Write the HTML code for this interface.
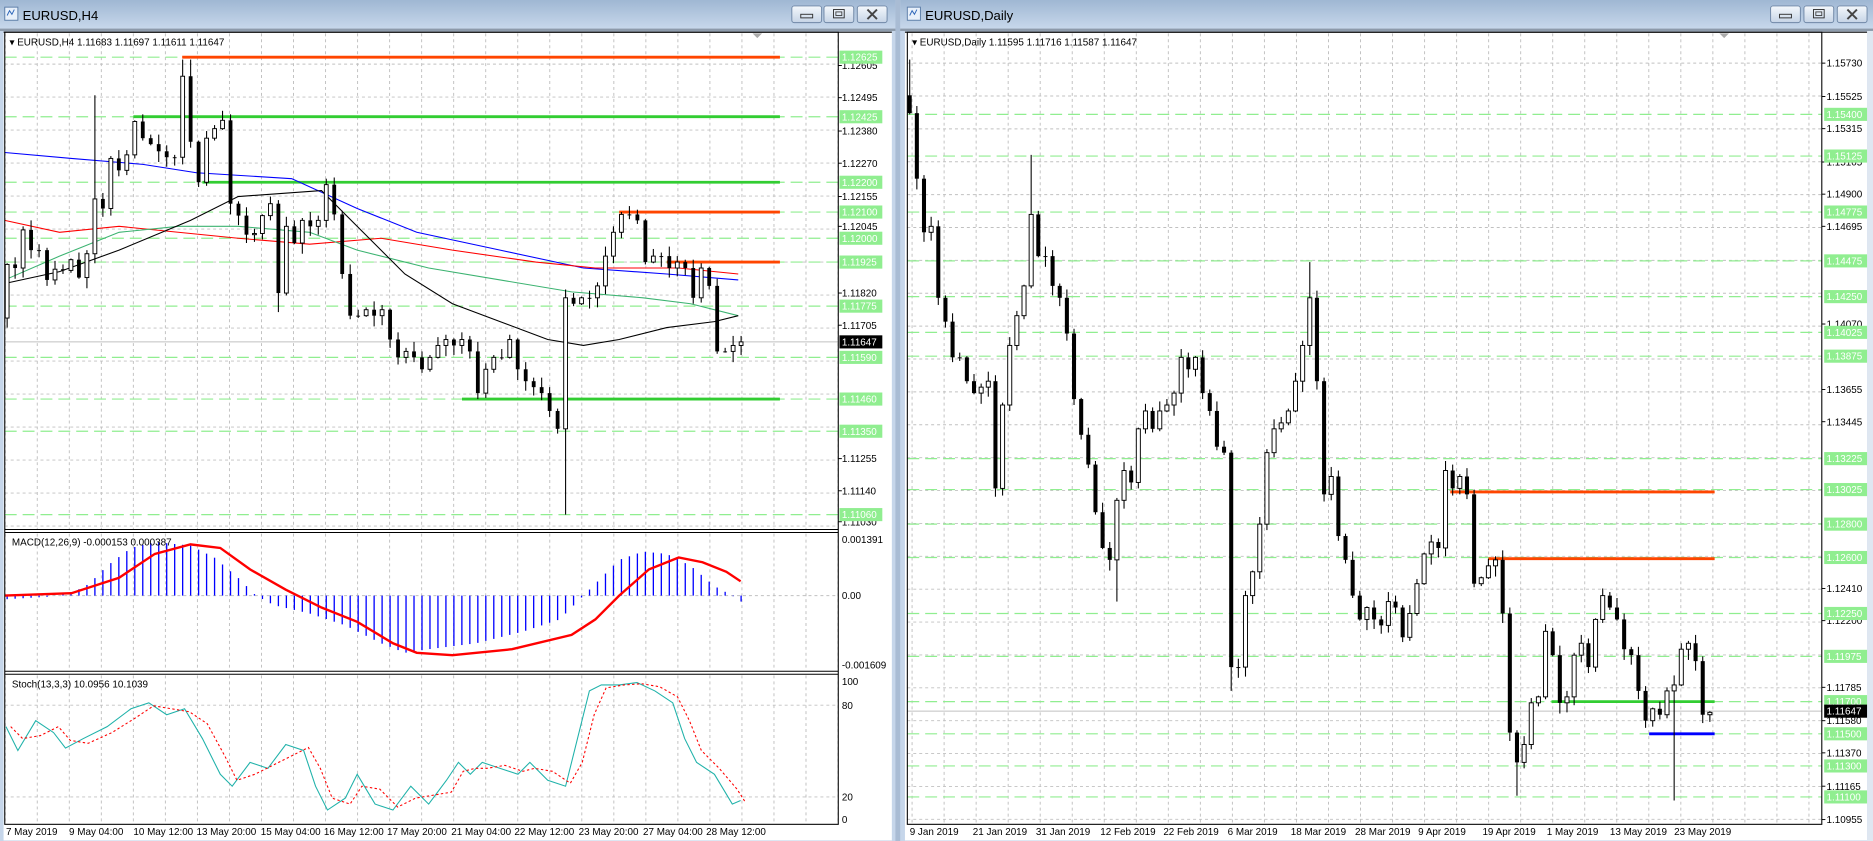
<!DOCTYPE html>
<html><head><meta charset="utf-8"><style>
html,body{margin:0;padding:0;width:1873px;height:841px;overflow:hidden;background:#c6d6ea}
svg{display:block}
text{font-family:"Liberation Sans",sans-serif}
</style></head><body>
<svg id="s" width="1873" height="841" viewBox="0 0 1573 706" preserveAspectRatio="none" xmlns="http://www.w3.org/2000/svg">
<defs>
<linearGradient id="tb" x1="0" y1="0" x2="0" y2="1"><stop offset="0" stop-color="#9fb7d3"/><stop offset="1" stop-color="#c9d9ec"/></linearGradient>
<linearGradient id="bt" x1="0" y1="0" x2="0" y2="1"><stop offset="0" stop-color="#f4f8fc"/><stop offset="1" stop-color="#c6d4e6"/></linearGradient>
</defs>
<rect x="0" y="0" width="752" height="706" fill="#c6d6ea"/>
<rect x="0" y="0" width="752" height="25" fill="url(#tb)"/>
<rect x="756" y="0" width="817" height="706" fill="#c6d6ea"/>
<rect x="756" y="0" width="817" height="25" fill="url(#tb)"/>
<rect x="752" y="0" width="4" height="706" fill="#a9bcd4"/>
<rect x="0" y="24" width="752" height="2" fill="#8d9aaa"/>
<rect x="756" y="24" width="817" height="2" fill="#8d9aaa"/>
<g><rect x="4" y="6" width="11" height="11" fill="#e8f0fa" stroke="#5c7ea8" stroke-width="0.8"/><path d="M6 13 L8 9 L10 12 L12 8" stroke="#2a64b8" fill="none" stroke-width="0.8"/></g>
<text x="19" y="17" font-size="11" fill="#000">EURUSD,H4</text>
<g><rect x="762" y="6" width="11" height="11" fill="#e8f0fa" stroke="#5c7ea8" stroke-width="0.8"/><path d="M764 13 L766 9 L768 12 L770 8" stroke="#2a64b8" fill="none" stroke-width="0.8"/></g>
<text x="777" y="17" font-size="11" fill="#000">EURUSD,Daily</text>
<g id="btns"></g>
<rect x="3" y="26.5" width="746" height="679" fill="#fff"/>
<rect x="760" y="26.5" width="808" height="679" fill="#fff"/>
<rect x="1568" y="26" width="5" height="680" fill="#dfe7f1"/>
<line x1="3" y1="27" x2="749" y2="27" stroke="#000" stroke-width="0.9"/>
<line x1="760" y1="27" x2="1568" y2="27" stroke="#000" stroke-width="0.9"/>
<g id="grid"></g>
<g id="lines"></g>
<g id="cand"></g>
<g id="lab" font-size="8.3"></g>
<rect x="4" y="27" width="700" height="665" fill="none" stroke="#000" stroke-width="0.9"/>
<line x1="4" y1="444.5" x2="704" y2="444.5" stroke="#000" stroke-width="0.9"/>
<line x1="4" y1="447" x2="704" y2="447" stroke="#000" stroke-width="0.9"/>
<line x1="4" y1="563.5" x2="704" y2="563.5" stroke="#000" stroke-width="0.9"/>
<line x1="4" y1="566" x2="704" y2="566" stroke="#000" stroke-width="0.9"/>
<rect x="762" y="27" width="768" height="665" fill="none" stroke="#000" stroke-width="0.9"/>
<text x="8" y="38" font-size="8.3">▾ EURUSD,H4  1.11683 1.11697 1.11611 1.11647</text>
<text x="766" y="38" font-size="8.3">▾ EURUSD,Daily  1.11595 1.11716 1.11587 1.11647</text>
<text x="10" y="458" font-size="8.3">MACD(12,26,9) -0.000153 0.000387</text>
<text x="10" y="577" font-size="8.3">Stoch(13,3,3) 10.0956 10.1039</text>
<path d="M632 28 L640 28 L636 32 Z" fill="#aaa"/>
<path d="M1444 28 L1452 28 L1448 32 Z" fill="#aaa"/>
<g font-size="8.3" id="tl">
<text x="5" y="701">7 May 2019</text><text x="58" y="701">9 May 04:00</text><text x="112" y="701">10 May 12:00</text><text x="165" y="701">13 May 20:00</text><text x="219" y="701">15 May 04:00</text><text x="272" y="701">16 May 12:00</text><text x="325" y="701">17 May 20:00</text><text x="379" y="701">21 May 04:00</text><text x="432" y="701">22 May 12:00</text><text x="486" y="701">23 May 20:00</text><text x="540" y="701">27 May 04:00</text><text x="593" y="701">28 May 12:00</text>
<text x="764" y="701">9 Jan 2019</text><text x="817" y="701">21 Jan 2019</text><text x="870" y="701">31 Jan 2019</text><text x="924" y="701">12 Feb 2019</text><text x="977" y="701">22 Feb 2019</text><text x="1031" y="701">6 Mar 2019</text><text x="1084" y="701">18 Mar 2019</text><text x="1138" y="701">28 Mar 2019</text><text x="1191" y="701">9 Apr 2019</text><text x="1245" y="701">19 Apr 2019</text><text x="1299" y="701">1 May 2019</text><text x="1352" y="701">13 May 2019</text><text x="1406" y="701">23 May 2019</text>
</g>
</svg>
<script>
function add(g,s){document.getElementById(g).insertAdjacentHTML('beforeend',s);}
[[665,692,720],[1487,1515,1543]].forEach(function(a){a.forEach(function(x,i){
 var s='<rect x="'+x+'" y="5" width="25" height="14" rx="2" fill="url(#bt)" stroke="#6f87a6" stroke-width="0.8"/>';
 var cx=x+12.5;
 if(i==0)s+='<rect x="'+(cx-5)+'" y="12" width="10" height="3" fill="none" stroke="#333" stroke-width="0.8"/>';
 if(i==1)s+='<rect x="'+(cx-4.5)+'" y="8" width="9" height="7" fill="none" stroke="#333" stroke-width="0.8"/><rect x="'+(cx-2.5)+'" y="10" width="5" height="3" fill="none" stroke="#333" stroke-width="0.7"/>';
 if(i==2)s+='<path d="M'+(cx-4)+' 8 L'+(cx+4)+' 16 M'+(cx+4)+' 8 L'+(cx-4)+' 16" stroke="#444" stroke-width="1.6"/>';
 add('btns',s);});});
var G='';
function dl(x1,y1,x2,y2,c,w,d){return '<line x1="'+x1+'" y1="'+y1+'" x2="'+x2+'" y2="'+y2+'" stroke="'+c+'" stroke-width="'+(w||0.8)+'"'+(d?' stroke-dasharray="'+d+'"':'')+'/>';}
for(var x=4.4;x<704;x+=26.9){G+=dl(x,28,x,444,'#c0c0c0',0.8,'2.5,2.5')+dl(x,448,x,563,'#c0c0c0',0.8,'2.5,2.5')+dl(x,567,x,692,'#c0c0c0',0.8,'2.5,2.5');}
for(var y=53.8;y<442;y+=27.7)G+=dl(4,y,704,y,'#c0c0c0',0.8,'2.5,2.5');
G+=dl(4,500,704,500,'#c0c0c0',0.8,'2.5,2.5');
G+=dl(4,592,704,592,'#c0c0c0',0.8,'2.5,2.5')+dl(4,669,704,669,'#c0c0c0',0.8,'2.5,2.5');
for(var x=766;x<1530;x+=26.9)G+=dl(x,28,x,692,'#c0c0c0',0.8,'2.5,2.5');
for(var y=53;y<692;y+=27.6)G+=dl(762,y,1530,y,'#c0c0c0',0.8,'2.5,2.5');
add('grid',G);
var L='';
var lg=[48,98,153,178,200,220,257,300,335,362,432];
lg.forEach(function(y){L+=dl(4,y,704,y,'#90ee90',1,'10,5');});
var rg=[96,131,178,219,249,279,299,385,411,440,468,515,551,589,616,643,669];
rg.forEach(function(y){L+=dl(762,y,1530,y,'#90ee90',1,'10,5');});
L+=dl(4,287,704,287,'#c0c0c0',0.8)+dl(762,597,1530,597,'#c0c0c0',0.8);
L+=dl(153,48,655,48,'#ff4500',2.4)+dl(112,98,655,98,'#32cd32',2.4)+dl(170,153,655,153,'#32cd32',2.4)+dl(520,178,655,178,'#ff4500',2.4)+dl(560,220,655,220,'#ff4500',2.4)+dl(388,335,655,335,'#32cd32',2.4);
L+=dl(1218,413,1440,413,'#ff4500',2.4)+dl(1250,469,1440,469,'#ff4500',2.4)+dl(1303,589,1440,589,'#32cd32',2.4)+dl(1385,616,1440,616,'#0000ff',2.4);
function pl(pts,c,w,d){return '<polyline points="'+pts.map(function(p){return p.join(',')}).join(' ')+'" fill="none" stroke="'+c+'" stroke-width="'+w+'"'+(d?' stroke-dasharray="'+d+'"':'')+'/>';}
L+=pl([[4,128],[60,133],[120,138],[165,145],[245,150],[300,175],[350,195],[420,210],[490,225],[560,230],[620,235]],'#0000ff',0.9);
L+=pl([[4,185],[50,195],[100,190],[200,200],[260,205],[320,200],[380,210],[450,220],[500,225],[570,225],[620,230]],'#ff0000',0.9);
L+=pl([[4,235],[50,215],[100,195],[150,190],[200,190],[260,195],[300,210],[360,225],[420,235],[480,245],[540,250],[580,255],[620,265]],'#3cb371',0.9);
L+=pl([[4,238],[50,228],[100,210],[160,185],[200,165],[270,160],[300,190],[340,230],[380,255],[420,270],[460,285],[490,290],[520,285],[560,275],[600,270],[620,265]],'#000',0.9);
function interp(p,x){for(var i=1;i<p.length;i++){if(x<=p[i][0]){var a=p[i-1],b=p[i];return a[1]+(b[1]-a[1])*(x-a[0])/(b[0]-a[0]);}}return p[p.length-1][1];}
var hp=[[6,503],[40,501],[60,498],[75,490],[90,475],[110,460],[130,455],[160,458],[180,468],[200,485],[215,500],[230,508],[260,515],[290,525],[320,540],[340,548],[360,545],[400,540],[440,530],[470,520],[490,500],[500,490],[520,470],[540,463],[560,465],[580,475],[600,492],[615,500],[622,505]];
for(var x=6;x<=623;x+=6.7){L+=dl(x,500,x,interp(hp,x),'#0000ff',1.1);}
L+=pl([[4,500],[60,498],[100,485],[130,465],[160,457],[185,460],[210,478],[240,495],[270,510],[300,522],[330,540],[350,548],[380,550],[430,545],[480,533],[500,520],[520,500],[545,478],[570,468],[590,472],[610,480],[622,488]],'#ff0000',2);
var st=[[5,610],[15,630],[30,605],[45,615],[55,628],[70,620],[90,610],[110,595],[125,590],[140,600],[155,595],[170,620],[185,650],[195,660],[210,640],[225,645],[240,625],[255,630],[265,660],[275,680],[290,670],[300,650],[315,675],[330,680],[345,660],[360,675],[375,655],[385,640],[395,650],[405,640],[420,645],[435,650],[445,640],[460,655],[475,660],[485,620],[495,580],[505,575],[520,575],[535,573],[550,580],[565,590],[575,620],[585,640],[600,650],[615,675],[622,672]];
var sr=st.map(function(p,i){var q=st[Math.max(0,i-1)];return [p[0]+4,(p[1]+q[1])/2];});
L+=pl(st,'#20b2aa',0.9)+pl(sr,'#ff0000',0.9,'2,2');
add('lines',L);
function cand(x0,step,cl,start,ov,bw){var C='',prev=start;
 cl.forEach(function(c,i){var x=x0+i*step,o=prev,r1=1+((i*37)%8),r2=1+((i*53)%9);var hi=Math.min(o,c)-r1,lo=Math.max(o,c)+r2;
 if(ov[i]){if(ov[i].h)hi=ov[i].h;if(ov[i].l)lo=ov[i].l;if(ov[i].o)o=ov[i].o;}
 C+=dl(x,hi,x,lo,'#000',0.9);var t=Math.min(o,c),h=Math.max(Math.abs(o-c),0.8);
 if(c<o)C+='<rect x="'+(x-bw/2)+'" y="'+t+'" width="'+bw+'" height="'+h+'" fill="#fff" stroke="#000" stroke-width="0.8"/>';
 else C+='<rect x="'+(x-bw/2)+'" y="'+t+'" width="'+bw+'" height="'+h+'" fill="#000"/>';
 prev=c;});return C;}
var Lc=[222,225,193,210,210,235,226,227,218,233,213,167,175,133,143,130,102,116,121,127,132,132,64,119,153,116,108,101,171,181,197,196,181,171,246,190,204,
185,190,185,155,180,230,265,265,260,265,260,285,300,295,300,310,300,290,285,290,285,295,330,310,300,300,285,310,320,325,330,345,360,
250,255,250,250,240,215,195,180,180,185,220,215,215,225,220,225,250,225,240,295,295,290,287];
add('cand',cand(6,6.7,Lc,267,{0:{l:275},11:{h:80},22:{h:50},23:{h:50},40:{h:150},70:{l:432},34:{l:262}},3.2));
var Rc=[95,150,195,190,250,270,300,300,320,330,325,320,410,340,290,265,240,180,215,215,240,250,280,335,365,390,430,460,470,420,395,405,360,345,360,345,340,330,300,310,300,330,345,375,380,560,560,500,480,440,380,360,355,345,320,290,250,320,415,400,450,470,500,520,510,520,525,505,510,535,515,490,465,455,460,395,410,400,415,490,485,475,470,515,615,640,625,590,585,530,550,590,585,550,540,560,520,500,510,520,545,550,580,605,595,600,580,575,545,540,555,600,598];
add('cand',cand(764,(1436-764)/(Rc.length-1),Rc,80,{0:{h:50},56:{h:220},45:{l:580},85:{l:668},107:{l:672},29:{l:505},17:{h:130}},3.4));
var B='';
function lab(x,y,t,bg,fg){if(bg)B+='<rect x="'+x+'" y="'+(y-5.5)+'" width="36" height="11" fill="'+bg+'"/>';B+='<text x="'+(x+2)+'" y="'+(y+3)+'" fill="'+(fg||'#000')+'">'+t+'</text>';}
[['1.12605',55],['1.12495',82],['1.12380',110],['1.12270',137],['1.12155',165],['1.12045',190],['1.11820',246],['1.11705',273],['1.11255',385],['1.11140',412],['1.11030',438]].forEach(function(a){lab(705,a[1],a[0]);B+=dl(704,a[1],707,a[1],'#000',0.8);});
[['1.12625',48],['1.12425',98],['1.12200',153],['1.12100',178],['1.12000',200],['1.11925',220],['1.11775',257],['1.11590',300],['1.11460',335],['1.11350',362],['1.11060',432]].forEach(function(a){lab(705,a[1],a[0],'#90ee90','#fff');});
lab(705,287,'1.11647','#000','#fff');
[['0.001391',453],['0.00',500],['-0.001609',558],['100',572],['80',592],['20',669],['0',688]].forEach(function(a){lab(705,a[1],a[0]);});
[['1.15730',53],['1.15525',81],['1.15315',108],['1.15105',136],['1.14900',163],['1.14695',190],['1.14070',272],['1.13655',327],['1.13445',354],['1.12410',494],['1.12200',521],['1.11785',577],['1.11580',605],['1.11370',632],['1.11165',660],['1.10955',688]].forEach(function(a){lab(1532,a[1],a[0]);B+=dl(1530,a[1],1533,a[1],'#000',0.8);});
[['1.15400',96],['1.15125',131],['1.14775',178],['1.14475',219],['1.14250',249],['1.14025',279],['1.13875',299],['1.13225',385],['1.13025',411],['1.12800',440],['1.12600',468],['1.12250',515],['1.11975',551],['1.11700',589],['1.11500',616],['1.11300',643],['1.11100',669]].forEach(function(a){lab(1532,a[1],a[0],'#90ee90','#fff');});
lab(1532,597,'1.11647','#000','#fff');
add('lab',B);
</script>
</body></html>
